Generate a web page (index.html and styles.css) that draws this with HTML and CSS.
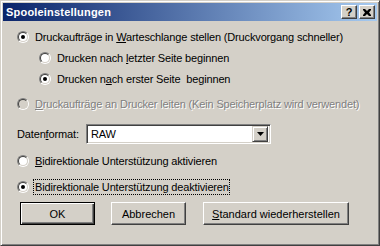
FILE: index.html
```html
<!DOCTYPE html>
<html lang="de">
<head>
  <meta charset="UTF-8">
  <title>Spooleinstellungen</title>
  <link rel="stylesheet" href="styles.css">
</head>
<body>
  <div class="dialog">
    <div class="titlebar">
      <span class="title">Spooleinstellungen</span>
      <div class="caption-buttons">
        <div class="cap-btn help">?</div>
        <div class="cap-btn">
          <svg width="8" height="7" viewBox="0 0 8 7">
            <path d="M0 0h2l2 2l2-2h2v1l-2 2.5l2 2.5v1h-2l-2-2l-2 2h-2v-1l2-2.5l-2-2.5z" fill="#000"/>
          </svg>
        </div>
      </div>
    </div>

    <div class="content">
      <div class="option">
        <span class="radio checked"></span>
        <span class="label">Druckaufträge in <u>W</u>arteschlange stellen (Druckvorgang schneller)</span>
      </div>
      <div class="option sub">
        <span class="radio"></span>
        <span class="label">Drucken nach <u>l</u>etzter Seite beginnen</span>
      </div>
      <div class="option sub">
        <span class="radio checked"></span>
        <span class="label">Drucken n<u>a</u>ch erster Seite &nbsp;beginnen</span>
      </div>
      <div class="option disabled gap-top">
        <span class="radio"></span>
        <span class="label"><u>D</u>ruckaufträge an Drucker leiten (Kein Speicherplatz wird verwendet)</span>
      </div>

      <div class="format-row">
        <span class="format-label">Daten<u>f</u>ormat:</span>
        <div class="combo">
          <span class="combo-value">RAW</span>
          <div class="combo-btn">
            <svg width="7" height="4" viewBox="0 0 7 4"><path d="M0 0h7l-3.5 4z" fill="#000"/></svg>
          </div>
        </div>
      </div>

      <div class="option bidi">
        <span class="radio"></span>
        <span class="label"><u>B</u>idirektionale Unterstützung aktivieren</span>
      </div>
      <div class="option bidi">
        <span class="radio checked"></span>
        <span class="label focus">Bidirektionale Unterstützung deaktivieren</span>
      </div>

      <div class="buttons">
        <div class="btn default">OK</div>
        <div class="btn">Abbrechen</div>
        <div class="btn wide"><u>S</u>tandard wiederherstellen</div>
      </div>
    </div>
  </div>
</body>
</html>
```

FILE: styles.css
```css
body {
  margin: 0;
  padding: 0;
  background-color: #d4d0c8;
  font-family: "Liberation Sans", Arial, sans-serif;
  font-size: 11px;
  color: #000;
}
.dialog {
  width: 380px;
  height: 246px;
  box-sizing: border-box;
  border: 1px solid;
  border-color: #d4d0c8 #404040 #404040 #d4d0c8;
  box-shadow: inset 1px 1px #fff, inset -1px -1px #808080;
  padding: 2px;
  background-color: #d4d0c8;
}
.titlebar {
  height: 18px;
  display: flex;
  align-items: center;
  justify-content: space-between;
  background: linear-gradient(to right, #0a246a, #a6caf0);
  padding: 0 2px 0 3px;
}
.title {
  color: #fff;
  font-weight: bold;
  letter-spacing: 0.2px;
}
.caption-buttons {
  display: flex;
  gap: 2px;
}
.cap-btn {
  width: 16px;
  height: 14px;
  box-sizing: border-box;
  background-color: #d4d0c8;
  border: 1px solid;
  border-color: #fff #404040 #404040 #fff;
  box-shadow: inset -1px -1px #808080;
  display: flex;
  align-items: center;
  justify-content: center;
}
.help {
  font-weight: bold;
  font-size: 11px;
  line-height: 12px;
}
.content {
  padding: 6px 0 0 14px;
  letter-spacing: -0.15px;
}
.option {
  height: 20px;
  display: flex;
  align-items: center;
  margin-bottom: 1px;
}
.option.sub {
  padding-left: 22px;
}
.option.gap-top {
  margin-top: 5px;
}
.option.bidi {
  margin-top: 6px;
  margin-bottom: 0;
}
.format-row + .option.bidi {
  margin-top: 7px;
}
.radio {
  position: relative;
  width: 12px;
  height: 12px;
  box-sizing: border-box;
  border-radius: 50%;
  border: 1px solid;
  border-color: #808080 #fff #fff #808080;
  margin-right: 6px;
  flex-shrink: 0;
}
.radio::before {
  content: "";
  position: absolute;
  inset: 0;
  border-radius: 50%;
  border: 1px solid;
  border-color: #404040 #d4d0c8 #d4d0c8 #404040;
  background-color: #fff;
}
.radio.checked::after {
  content: "";
  position: absolute;
  left: 3px;
  top: 3px;
  width: 4px;
  height: 4px;
  border-radius: 50%;
  background-color: #000;
}
.disabled .radio::before {
  background-color: #d4d0c8;
}
.disabled .label {
  color: #808080;
  text-shadow: 1px 1px #fff;
}
.label {
  white-space: nowrap;
}
.label.focus {
  outline: 1px dotted #000;
  padding: 1px 0 1px 1px;
  margin-left: -1px;
}
.format-row {
  display: flex;
  align-items: center;
  margin-top: 10px;
  height: 20px;
}
.format-label {
  width: 69px;
}
.combo {
  width: 185px;
  height: 20px;
  box-sizing: border-box;
  border: 1px solid;
  border-color: #808080 #fff #fff #808080;
  box-shadow: inset 1px 1px #404040, inset -1px -1px #d4d0c8;
  background-color: #fff;
  display: flex;
  align-items: center;
  justify-content: space-between;
  padding: 2px;
}
.combo-value {
  padding-left: 2px;
}
.combo-btn {
  width: 16px;
  height: 16px;
  box-sizing: border-box;
  background-color: #d4d0c8;
  border: 1px solid;
  border-color: #d4d0c8 #404040 #404040 #d4d0c8;
  box-shadow: inset 1px 1px #fff, inset -1px -1px #808080;
  display: flex;
  align-items: center;
  justify-content: center;
}
.buttons {
  display: flex;
  margin-top: 5px;
  padding-left: 3px;
  gap: 16px;
  letter-spacing: 0;
}
.btn {
  width: 75px;
  height: 23px;
  box-sizing: border-box;
  border: 1px solid;
  border-color: #fff #404040 #404040 #fff;
  box-shadow: inset -1px -1px #808080;
  display: flex;
  align-items: center;
  justify-content: center;
}
.btn.default {
  border-color: #000;
  box-shadow: inset 1px 1px #fff, inset -1px -1px #404040, inset -2px -2px #808080;
}
.btn.wide {
  width: 146px;
  margin-left: 1px;
}
```
